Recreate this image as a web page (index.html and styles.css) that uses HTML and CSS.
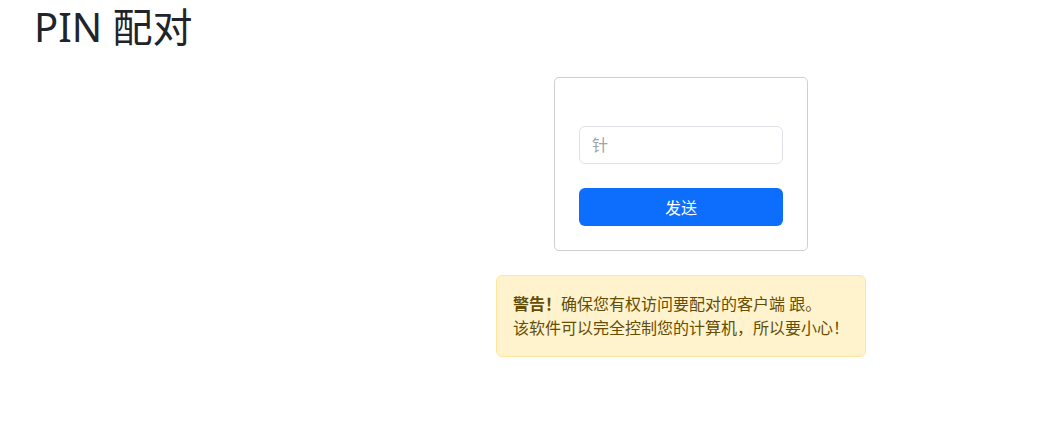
FILE: index.html
```html
<!DOCTYPE html>
<html lang="zh-CN">
<head>
    <meta charset="UTF-8">
    <meta name="viewport" content="width=device-width, initial-scale=1.0">
    <title>PIN 配对</title>
    <link rel="stylesheet" href="styles.css">
</head>
<body>
    <div class="container">
        <h1>PIN 配对</h1>
        <div class="row">
            <div class="spacer"></div>
            <div class="pair-col">
                <form class="card" onsubmit="return false;">
                    <input type="text" id="pin" placeholder="针">
                    <button type="submit">发送</button>
                </form>
                <div class="alert">
                    <strong>警告！</strong>确保您有权访问要配对的客户端 跟。<br>
                    该软件可以完全控制您的计算机，所以要小心！
                </div>
            </div>
        </div>
    </div>
</body>
</html>
```

FILE: styles.css
```css
body {
    font-family: "Noto Sans", "Noto Sans CJK SC", sans-serif;
    font-size: 16px;
    line-height: 1.5;
    color: #212529;
    background-color: #ffffff;
    margin: 0;
}
.container {
    padding: 0 34px;
}
h1 {
    font-size: 40px;
    font-weight: 400;
    line-height: 1.2;
    margin: 3px 0 0 0;
}
.row {
    display: flex;
    margin-top: 26px;
}
.spacer {
    width: 462px;
}
.pair-col {
    width: 370px;
    display: flex;
    flex-direction: column;
    align-items: center;
}
.card {
    width: 254px;
    box-sizing: border-box;
    border: 1px solid #cfcfcf;
    border-radius: 5px;
    padding: 48px 24px 24px 24px;
    margin: 0;
}
input, button {
    display: block;
    width: 100%;
    box-sizing: border-box;
    font-family: inherit;
    font-size: 16px;
    border-radius: 6px;
}
input {
    height: 38px;
    padding: 6px 12px;
    border: 1px solid #dee2e6;
    color: #212529;
}
input::placeholder {
    color: #a0a4a8;
}
button {
    height: 38px;
    margin-top: 24px;
    border: none;
    background-color: #0d6efd;
    color: #ffffff;
    cursor: pointer;
}
.alert {
    width: 100%;
    box-sizing: border-box;
    margin-top: 24px;
    padding: 16px;
    background-color: #fff3cd;
    border: 1px solid #ffe69c;
    border-radius: 6px;
    color: #664d03;
    font-size: 16px;
    line-height: 24px;
}
.alert strong {
    font-weight: 700;
}
```
